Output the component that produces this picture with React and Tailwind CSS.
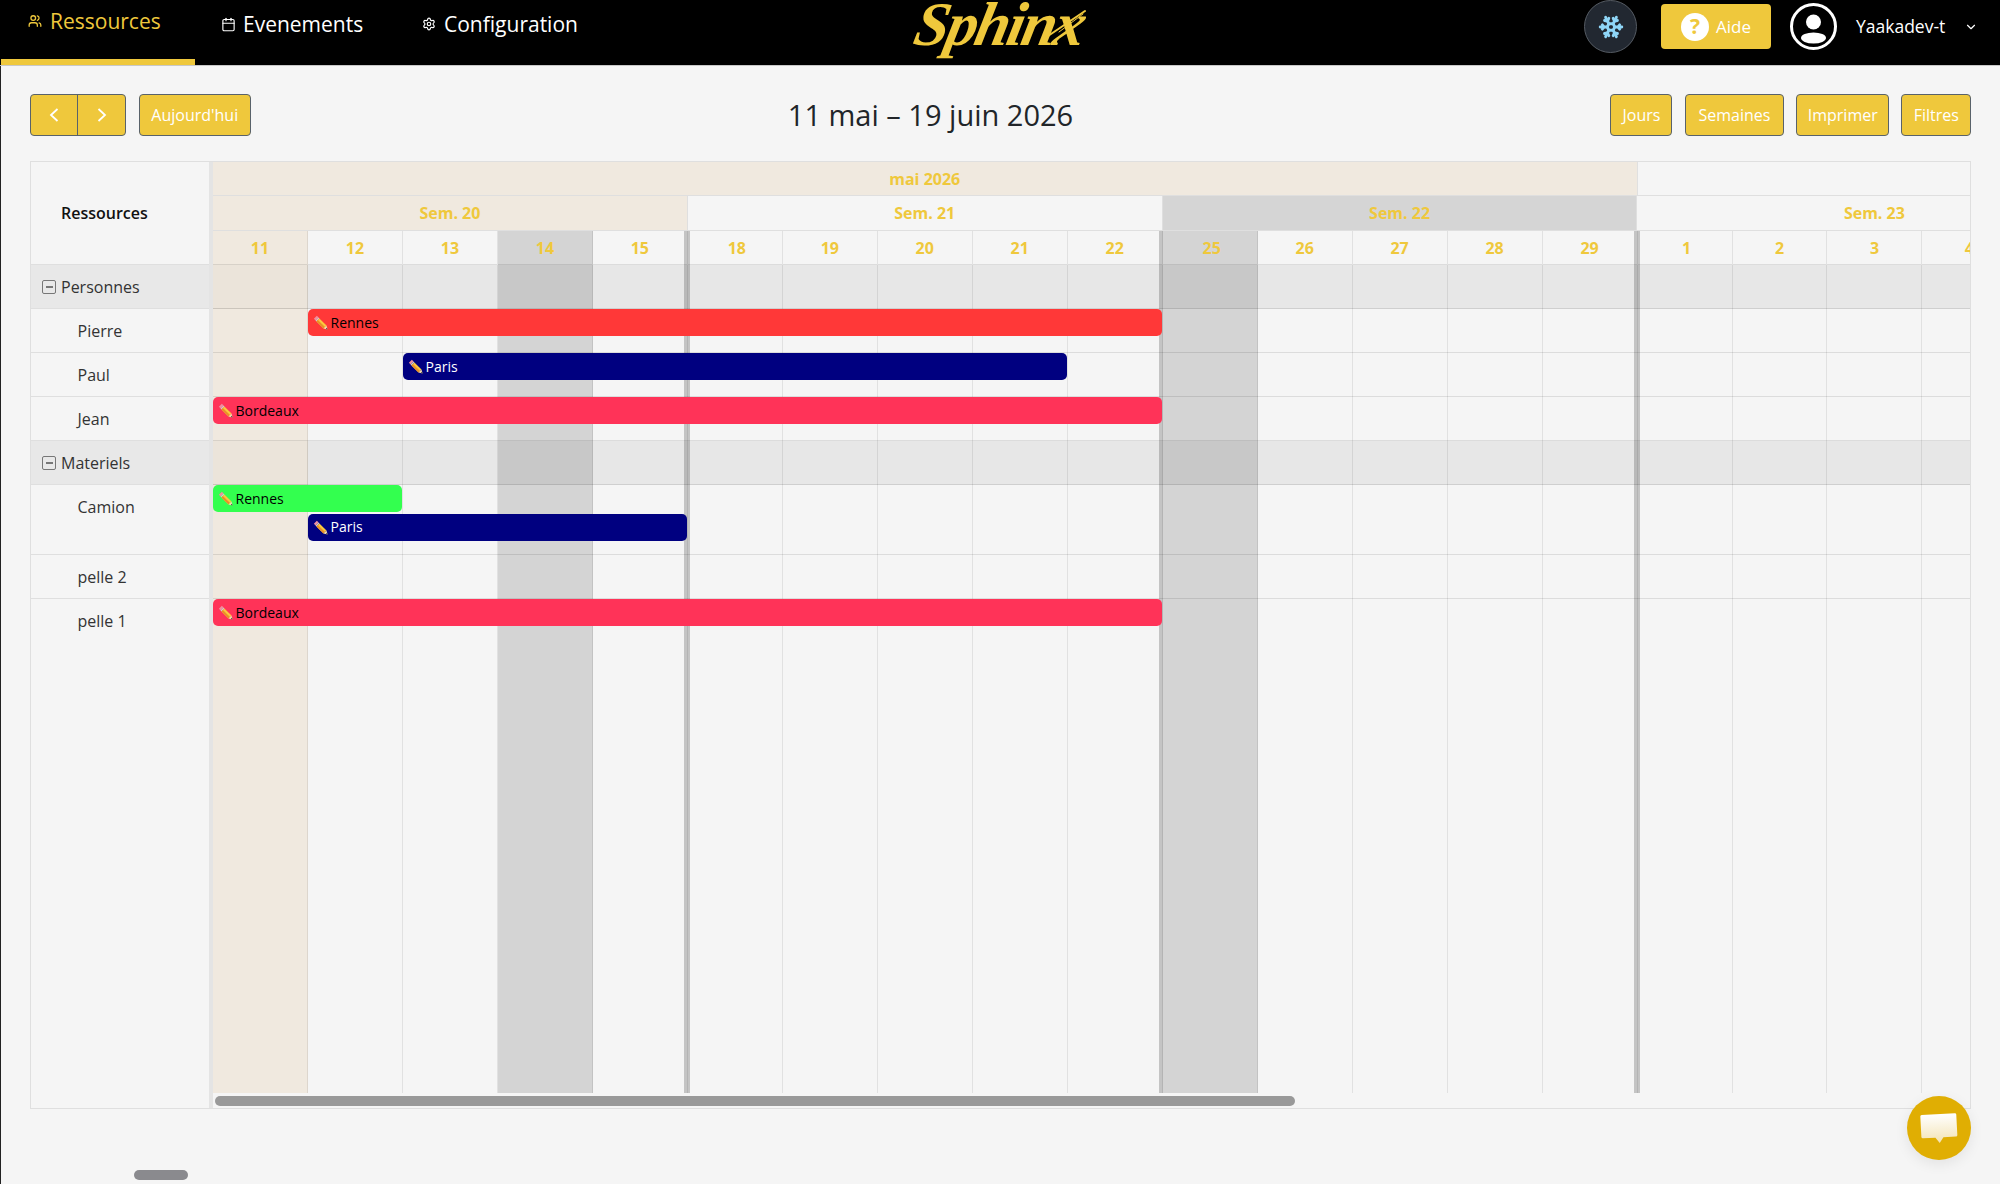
import React from "react";
import { Users, Calendar, Settings, Snowflake, ChevronDown } from "lucide-react";

const weeks = [
  { label: "Sem. 20", bg: "bg-[#f0e9df]", days: [11, 12, 13, 14, 15] },
  { label: "Sem. 21", bg: "", days: [18, 19, 20, 21, 22] },
  { label: "Sem. 22", bg: "bg-[#d5d5d5]", days: [25, 26, 27, 28, 29] },
  { label: "Sem. 23", bg: "", days: [1, 2, 3, 4, 5] },
];

const dayBg = { 11: "bg-[#f0e9df]", 14: "bg-[#d4d4d4]", 25: "bg-[#d4d4d4]" };

function Pencil() {
  return (
    <svg viewBox="0 0 14 14" className="w-[15px] h-[15px] shrink-0">
      <path d="M0.8 3.6 L3.6 0.8 L5.2 2.4 L2.4 5.2 Z" fill="#ef8f9e" />
      <path d="M2.4 5.2 L5.2 2.4 L6 3.2 L3.2 6 Z" fill="#c9ccd1" />
      <path d="M6 3.2 L12.6 9.8 L9.8 12.6 L3.2 6 Z" fill="#fbc93d" />
      <path d="M4.6 4.6 L11.2 11.2 L9.8 12.6 L3.2 6 Z" fill="#e8902a" />
      <path d="M12.6 9.8 L13.6 13.6 L9.8 12.6 Z" fill="#f6dcae" />
      <path d="M13 12 L13.6 13.6 L12 13 Z" fill="#333" />
    </svg>
  );
}

function Bar({ label, color, text, left, width }) {
  return (
    <div
      className={`h-[27px] rounded-[5px] flex items-center pl-[5px] gap-[2.5px] text-[14px] leading-none ${color} ${text} ${left} ${width}`}
    >
      <Pencil />
      <span>{label}</span>
    </div>
  );
}

function Minus() {
  return (
    <span className="w-[14px] h-[14px] rounded-[2px] border-[1.5px] border-[#777] flex items-center justify-center shrink-0">
      <span className="w-[7px] h-[1.5px] bg-[#777]" />
    </span>
  );
}

function Btn({ children, className = "" }) {
  return (
    <button className={`h-[42px] rounded-[4px] border border-[#59626a] bg-[#efc83c] text-white text-[16px] ${className}`}>
      {children}
    </button>
  );
}

function Side({ children, group, tall, last }) {
  return (
    <div
      className={`flex items-start text-[#333] text-[16px] leading-[44px] ${tall ? "h-[70px]" : "h-[44px]"} ${
        group ? "bg-[#e8e8e8] pl-[11px] gap-[5px]" : "pl-[46.5px]"
      } ${last ? "" : "border-b border-[#dfdfdf]"}`}
    >
      {group && (
        <span className="h-[44px] flex items-center">
          <Minus />
        </span>
      )}
      <span>{children}</span>
    </div>
  );
}

function Row({ children, group, tall, last }) {
  return (
    <div
      className={`flex ${group ? "" : "flex-col gap-[1.5px]"} ${tall ? "h-[70px]" : "h-[44px]"} ${group ? "bg-black/[.055]" : ""} ${
        last ? "" : "border-b border-black/10"
      }`}
    >
      {group && <div className="w-[94px] h-full bg-[#ebe4da]" />}
      {children}
    </div>
  );
}

export default function App() {
  return (
    <div className="w-[2000px] h-[1184px] relative overflow-hidden bg-[#f5f5f5] flex flex-col font-['Open_Sans',sans-serif]">
      <header className="h-[66px] shrink-0 bg-black border-b border-[#c8c8c8] grid grid-cols-3">
        <nav className="flex items-stretch pl-px">
          <div className="w-[194px] h-[65px] border-b-[6px] border-[#efc83c] pl-[27px] pt-[6px] flex items-start gap-[8px] text-[#efc83c]">
            <span className="h-[30px] flex items-center"><Users size={14} strokeWidth={2.2} /></span>
            <span className="text-[21px] leading-[30px]">Ressources</span>
          </div>
          <div className="ml-[26px] w-[201px] pt-[9px] flex items-start gap-[7px] text-white">
            <span className="h-[30px] flex items-center"><Calendar size={15} strokeWidth={1.8} /></span>
            <span className="text-[21px] leading-[30px]">Evenements</span>
          </div>
          <div className="pt-[9px] flex items-start gap-[8px] text-white">
            <span className="h-[30px] flex items-center"><Settings size={14} strokeWidth={2} /></span>
            <span className="text-[21px] leading-[30px]">Configuration</span>
          </div>
        </nav>
        <div className="relative flex justify-center items-start overflow-hidden">
          <span className="block -mt-[16px] text-[#efc83c] text-[62px] leading-[80px] font-bold italic font-['Liberation_Serif',serif] -skew-x-12 tracking-[-2.5px]">
            Sphinx
          </span>
          <svg viewBox="0 0 40 30" className="absolute left-[380px] top-[8px] w-[40px] h-[30px]" fill="none" stroke="#efc83c" strokeLinecap="round">
            <path d="M1 28 L38 3" strokeWidth="2" />
            <path d="M12 24 L36 6" strokeWidth="1" />
          </svg>
        </div>
        <div className="flex items-center justify-end pr-[22px]">
          <div className="w-[53px] h-[53px] -mt-[12px] rounded-full bg-[#222831] border border-[#555b63] flex items-center justify-center">
            <Snowflake size={26} strokeWidth={2.6} className="text-[#8fd6f7]" />
          </div>
          <div className="ml-[24px] w-[110px] h-[45px] -mt-[12px] rounded-[4px] bg-[#efc83c] flex items-center pl-[20px] gap-[7px] text-white text-[17px] font-medium">
            <span className="w-[28px] h-[28px] rounded-full bg-white text-[#efc83c] text-[21px] font-bold flex items-center justify-center leading-none">?</span>
            <span>Aide</span>
          </div>
          <svg viewBox="0 0 47 47" className="ml-[19px] w-[47px] h-[47px] -mt-[12px]">
            <circle cx="23.5" cy="23.5" r="22" fill="none" stroke="#fff" strokeWidth="3" />
            <circle cx="23.5" cy="19" r="7.5" fill="#fff" />
            <ellipse cx="23.5" cy="35" rx="12.5" ry="5.5" fill="#fff" />
          </svg>
          <span className="ml-[19px] w-[108px] -mt-[12px] text-white text-[17.5px] font-medium">Yaakadev-t</span>
          <ChevronDown size={14} strokeWidth={2} className="text-white -mt-[12px]" />
        </div>
      </header>

      <div className="flex-1 min-h-0 border-l border-[#222] flex flex-col pl-[29px] pr-[29px]">
        <div className="h-[95px] shrink-0 flex items-center justify-between pt-[3px]">
          <div className="flex items-center gap-[13px]">
            <div className="flex h-[42px] w-[96px] rounded-[4px] border border-[#59626a] bg-[#efc83c] text-white">
              <span className="w-[47px] border-r border-[#59626a] flex items-center justify-center">
                <svg viewBox="0 0 10 14" className="w-[10px] h-[14px]" fill="none" stroke="#fff" strokeWidth="1.8"><path d="M8.5 1 L2 7 L8.5 13" /></svg>
              </span>
              <span className="flex-1 flex items-center justify-center">
                <svg viewBox="0 0 10 14" className="w-[10px] h-[14px]" fill="none" stroke="#fff" strokeWidth="1.8"><path d="M1.5 1 L8 7 L1.5 13" /></svg>
              </span>
            </div>
            <Btn className="w-[111.5px]">Aujourd'hui</Btn>
          </div>
          <h1 className="-mt-[2px] text-[29px] text-[#212529] leading-none">11 mai – 19 juin 2026</h1>
          <div className="flex items-center gap-[12.5px]">
            <Btn className="w-[62px]">Jours</Btn>
            <Btn className="w-[99px]">Semaines</Btn>
            <Btn className="w-[92.5px]">Imprimer</Btn>
            <Btn className="w-[69.5px]">Filtres</Btn>
          </div>
        </div>

        <div className="h-[948px] shrink-0 border-[1.5px] border-[#dfdfdf] flex overflow-hidden">
          <div className="w-[182px] shrink-0 border-r-[4px] border-[#e4e4e4]">
            <div className="h-[103px] border-b border-[#dfdfdf] flex items-center pl-[30px] text-[16px] font-semibold text-[#111]">
              Ressources
            </div>
            <Side group>Personnes</Side>
            <Side>Pierre</Side>
            <Side>Paul</Side>
            <Side>Jean</Side>
            <Side group>Materiels</Side>
            <Side tall>Camion</Side>
            <Side>pelle 2</Side>
            <Side last>pelle 1</Side>
          </div>

          <div className="flex-1 min-w-0 flex flex-col overflow-hidden text-[#efc83c] font-bold text-[16px]">
            <div className="h-[34px] shrink-0 flex border-b border-[#dfdfdf]">
              <div className="w-[1424.5px] shrink-0 bg-[#f0e9df] border-r border-[#e0e0e0] flex items-center justify-center">mai 2026</div>
            </div>
            <div className="h-[35px] shrink-0 flex">
              {weeks.map((w) => (
                <div key={w.label} className={`w-[474.83px] shrink-0 flex items-center justify-center border-r border-b border-[#dfdfdf] ${w.bg}`}>
                  {w.label}
                </div>
              ))}
            </div>
            <div className="h-[862px] shrink-0 relative flex">
              {weeks.map((w, wi) =>
                w.days.map((d, i) => (
                  <div key={d} className={`w-[94.97px] shrink-0 relative flex flex-col border-r border-black/[.08] ${dayBg[d] || ""}`}>
                    <div className={`h-[34px] shrink-0 flex items-center justify-center border-b border-black/10 ${i === 0 && wi > 0 ? "pl-[4px]" : ""}`}>{d}</div>
                    {i === 4 && <span className="absolute top-0 bottom-0 -right-[3px] w-[6px] bg-black/20" />}
                  </div>
                ))
              )}
              <div className="absolute top-[34px] left-0 right-0 flex flex-col text-black font-normal">
                <Row group />
                <Row><Bar label="Rennes" color="bg-[#ff3838]" text="text-black" left="ml-[95px]" width="w-[854px]" /></Row>
                <Row><Bar label="Paris" color="bg-[#000080]" text="text-white" left="ml-[190px]" width="w-[664px]" /></Row>
                <Row><Bar label="Bordeaux" color="bg-[#ff3358]" text="text-black" left="ml-0" width="w-[949px]" /></Row>
                <Row group />
                <Row tall>
                  <Bar label="Rennes" color="bg-[#33ff4f]" text="text-black" left="ml-0" width="w-[189px]" />
                  <Bar label="Paris" color="bg-[#000080]" text="text-white" left="ml-[95px]" width="w-[379px]" />
                </Row>
                <Row />
                <Row last><Bar label="Bordeaux" color="bg-[#ff3358]" text="text-black" left="ml-0" width="w-[949px]" /></Row>
              </div>
            </div>
            <div className="flex-1 min-h-0 pt-[3px] pl-[2px]">
              <div className="w-[1080px] h-[10px] rounded-full bg-[#999]" />
            </div>
          </div>
        </div>

        <div className="ml-[104px] mt-[61px] w-[54px] h-[10px] rounded-full bg-[#8a8a8e]" />
      </div>

      <div className="absolute left-[1907px] top-[1096px] w-[64px] h-[64px] rounded-full bg-[#e0ae03] shadow-[0_4px_14px_rgba(0,0,0,0.08)] flex items-center justify-center">
        <svg viewBox="0 0 38 32" className="w-[38px] h-[32px] -rotate-3 mt-[2px]">
          <defs>
            <linearGradient id="chat" x1="0" y1="0" x2="0" y2="1">
              <stop offset="0" stopColor="#ffffff" />
              <stop offset="1" stopColor="#f3e3b4" />
            </linearGradient>
          </defs>
          <path d="M2.5 1 H35.5 A1.5 1.5 0 0 1 37 2.5 V23 A1.5 1.5 0 0 1 35.5 24.5 H23 L19 30 L15 24.5 H2.5 A1.5 1.5 0 0 1 1 23 V2.5 A1.5 1.5 0 0 1 2.5 1 Z" fill="url(#chat)" />
        </svg>
      </div>
    </div>
  );
}
